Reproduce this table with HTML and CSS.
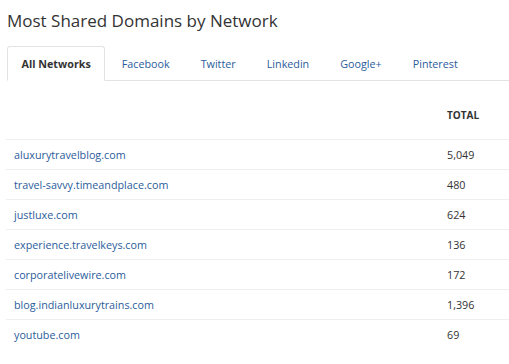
FILE: index.html
```html
<!DOCTYPE html>
<html lang="en">
<head>
  <meta charset="UTF-8">
  <title>Most Shared Domains by Network</title>
  <link rel="stylesheet" href="styles.css">
</head>
<body>

  <div class="panel">
    <h2 class="panel-title">Most Shared Domains by Network</h2>

    <!-- Network tabs -->
    <ul class="nav-tabs">
      <li class="tab active"><a href="#">All Networks</a></li>
      <li class="tab"><a href="#">Facebook</a></li>
      <li class="tab"><a href="#">Twitter</a></li>
      <li class="tab"><a href="#">Linkedin</a></li>
      <li class="tab"><a href="#">Google+</a></li>
      <li class="tab"><a href="#">Pinterest</a></li>
    </ul>

    <table class="domains">
      <thead>
        <tr>
          <th></th>
          <th class="total">Total</th>
        </tr>
      </thead>
      <tbody>
        <tr><td><a href="#">aluxurytravelblog.com</a></td><td>5,049</td></tr>
        <tr><td><a href="#">travel-savvy.timeandplace.com</a></td><td>480</td></tr>
        <tr><td><a href="#">justluxe.com</a></td><td>624</td></tr>
        <tr><td><a href="#">experience.travelkeys.com</a></td><td>136</td></tr>
        <tr><td><a href="#">corporatelivewire.com</a></td><td>172</td></tr>
        <tr><td><a href="#">blog.indianluxurytrains.com</a></td><td>1,396</td></tr>
        <tr><td><a href="#">youtube.com</a></td><td>69</td></tr>
      </tbody>
    </table>
  </div>

</body>
</html>
```

FILE: styles.css
```css
/* Variables */
:root {
  --text-color: #333;
  --link-color: #2a5c9b;
  --tab-border: #e3e3e3;
  --row-border: #efefef;
}

/* General */
body {
  margin: 0;
  font-family: 'Open Sans', 'DejaVu Sans', sans-serif;
  font-size: 10.75px;
  color: var(--text-color);
  background: #fff;
}

a {
  color: var(--link-color);
  text-decoration: none;
}

.panel {
  padding: 8px 0 0 6px;
}

.panel-title {
  margin: 0 0 13px 1px;
  font-size: 17px;
  font-weight: 400;
  line-height: 25px;
}

/* Tabs */
.nav-tabs {
  display: flex;
  list-style: none;
  margin: 0 0 0 1px;
  padding: 0;
  border-bottom: 1px solid var(--tab-border);
}

.tab {
  margin-right: 2px;
  margin-bottom: -1px;
}

.tab a {
  display: block;
  padding: 10px 13.5px 9px;
  line-height: 14px;
  white-space: nowrap;
  border: 1px solid transparent;
  border-radius: 3px 3px 0 0;
}

.tab.active a {
  color: var(--text-color);
  font-weight: 700;
  background: #fff;
  border-color: var(--tab-border);
  border-bottom-color: #fff;
}

/* Table */
.domains {
  width: 100%;
  border-collapse: collapse;
}

.domains th,
.domains td {
  padding: 8px 8px 7px;
  line-height: 14px;
  text-align: left;
  white-space: nowrap;
  border-bottom: 1px solid var(--row-border);
}

.domains th {
  padding-top: 27px;
  padding-bottom: 17px;
  font-size: 10px;
  font-weight: 700;
  text-transform: uppercase;
}

.domains td:last-child,
.domains th.total {
  width: 54px;
}

.domains tbody tr:last-child td {
  border-bottom: none;
}
```
